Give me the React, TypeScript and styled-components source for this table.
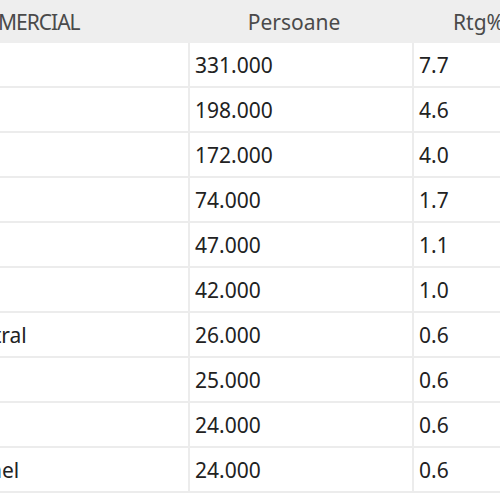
import { createGlobalStyle } from "styled-components";
import styled from "styled-components";

const GlobalStyle = createGlobalStyle`
  html, body {
    margin: 0;
    padding: 0;
    background: #ffffff;
  }
  body {
    font-family: "Noto Sans", "Open Sans", sans-serif;
    overflow: hidden;
  }
`;

type Row = { name: string; persons: string; rtg: string };

const rows: Row[] = [
  { name: "Pro TV", persons: "331.000", rtg: "7.7" },
  { name: "Antena 1", persons: "198.000", rtg: "4.6" },
  { name: "Kanal D", persons: "172.000", rtg: "4.0" },
  { name: "Prima TV", persons: "74.000", rtg: "1.7" },
  { name: "Antena 3", persons: "47.000", rtg: "1.1" },
  { name: "România TV", persons: "42.000", rtg: "1.0" },
  { name: "Comedy Central", persons: "26.000", rtg: "0.6" },
  { name: "Pro Cinema", persons: "25.000", rtg: "0.6" },
  { name: "Digi 24", persons: "24.000", rtg: "0.6" },
  { name: "Happy Channel", persons: "24.000", rtg: "0.6" },
];

const Viewport = styled.div`
  width: 500px;
  height: 500px;
  overflow: hidden;
`;

const Table = styled.table`
  border-collapse: separate;
  border-spacing: 0;
  table-layout: fixed;
  width: 695px;
  margin-left: -136px;
  font-size: 21px;
  color: #222222;
`;

const HeadCell = styled.th<{ $width: number; $label?: boolean }>`
  width: ${({ $width }) => $width}px;
  height: 43px;
  box-sizing: border-box;
  padding: 0 21px 0 5px;
  background: #eeeeee;
  color: #4a4a4a;
  font-weight: 400;
  text-align: ${({ $label }) => ($label ? "left" : "center")};
  letter-spacing: ${({ $label }) => ($label ? "-1px" : "0")};
  text-indent: ${({ $label }) => ($label ? "12px" : "0")};
  white-space: nowrap;
  vertical-align: middle;
`;

const Cell = styled.td`
  height: 45px;
  box-sizing: border-box;
  padding: 0 5px;
  border-right: 2px solid #ececec;
  border-bottom: 2px solid #ececec;
  white-space: nowrap;
  vertical-align: middle;
  text-align: left;
`;

export default function App() {
  return (
    <Viewport>
      <GlobalStyle />
      <Table>
        <thead>
          <tr>
            <HeadCell $width={326} $label>POST TV - COMERCIAL</HeadCell>
            <HeadCell $width={224}>Persoane</HeadCell>
            <HeadCell $width={145}>Rtg%</HeadCell>
          </tr>
        </thead>
        <tbody>
          {rows.map((r) => (
            <tr key={r.name}>
              <Cell>{r.name}</Cell>
              <Cell>{r.persons}</Cell>
              <Cell>{r.rtg}</Cell>
            </tr>
          ))}
        </tbody>
      </Table>
    </Viewport>
  );
}
